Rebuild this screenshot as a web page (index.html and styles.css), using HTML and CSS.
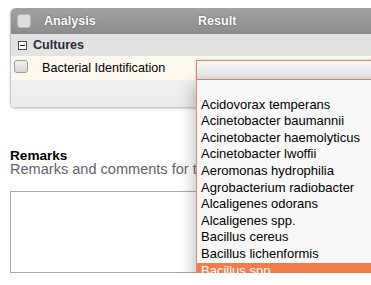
FILE: index.html
```html
<!DOCTYPE html>
<html lang="en">
<head>
    <meta charset="UTF-8">
    <meta name="viewport" content="width=device-width, initial-scale=1.0">
    <title>Analyses</title>
    <link rel="stylesheet" href="styles.css">
</head>
<body>
    <div class="analyses">
        <div class="head-row">
            <span class="check check-head"></span>
            <span class="col-analysis">Analysis</span>
            <span class="col-result">Result</span>
        </div>
        <div class="cat-row">
            <span class="toggle"></span>
            <span>Cultures</span>
        </div>
        <div class="item-row">
            <span class="check"></span>
            <span class="item-name">Bacterial Identification</span>
            <div class="result-cell">
                <div class="select"></div>
                <ul class="options">
                    <li>&nbsp;</li>
                    <li>Acidovorax temperans</li>
                    <li>Acinetobacter baumannii</li>
                    <li>Acinetobacter haemolyticus</li>
                    <li>Acinetobacter lwoffii</li>
                    <li>Aeromonas hydrophilia</li>
                    <li>Agrobacterium radiobacter</li>
                    <li>Alcaligenes odorans</li>
                    <li>Alcaligenes spp.</li>
                    <li>Bacillus cereus</li>
                    <li>Bacillus lichenformis</li>
                    <li class="active">Bacillus spp.</li>
                    <li>Bacteroides fragilis</li>
                    <li>Bacteroides spp.</li>
                </ul>
            </div>
        </div>
        <div class="foot-row"></div>
    </div>

    <div class="remarks">
        <h3>Remarks</h3>
        <p>Remarks and comments for this analysis request</p>
        <textarea></textarea>
    </div>
</body>
</html>
```

FILE: styles.css
```css
html {
    overflow: hidden;
}
body {
    margin: 0;
    padding: 8px 0 0 10px;
    font-family: "Liberation Sans", Arial, sans-serif;
    color: #000;
}
.analyses {
    margin-right: -20px;
    border: 1px solid #c6c6c6;
    border-top: none;
    border-radius: 5px;
    box-shadow: 0 1px 2px rgba(0, 0, 0, 0.18);
}
.head-row {
    display: grid;
    grid-template-columns: 33px 152px 1fr;
    height: 26px;
    align-items: center;
    background: linear-gradient(#a2a2a2, #8b8b8b);
    border-radius: 5px 5px 0 0;
    color: #fff;
    font-size: 12.6px;
    font-weight: bold;
    text-shadow: 0 0 2px rgba(0, 0, 0, 0.45);
}
.check {
    display: block;
    width: 12px;
    height: 11px;
    border: 1px solid #9a9a9a;
    border-radius: 3px;
    background: linear-gradient(#f2f2f2, #d4d4d4);
}
.check-head {
    margin-left: 6px;
    height: 12px;
    border-color: #b8b8b8;
    background: #dedede;
}
.col-result {
    padding-left: 2px;
}
.cat-row {
    display: flex;
    align-items: center;
    gap: 6px;
    height: 22px;
    padding-left: 7px;
    background: #e2e2e2;
    color: #2b2b35;
    font-size: 12.6px;
    font-weight: bold;
}
.toggle {
    position: relative;
    width: 7px;
    height: 7px;
    border: 1px solid #444;
    background: #fff;
}
.toggle::after {
    content: "";
    position: absolute;
    left: 1px;
    right: 1px;
    top: 3px;
    height: 1px;
    background: #222;
}
.item-row {
    display: grid;
    grid-template-columns: 31px 154px 1fr;
    height: 24px;
    background: #fff8ee;
    font-size: 12.6px;
}
.item-row .check {
    margin: 4px 0 0 3px;
}
.item-name {
    padding-top: 5px;
}
.result-cell {
    position: relative;
    padding-top: 4px;
}
.select {
    height: 18px;
    border: 1px solid #d58c6c;
    box-shadow: 0 0 2px #f4b08f;
    background: linear-gradient(#f8f8f8, #e3e3e3);
}
.options {
    position: absolute;
    top: 100%;
    left: 0;
    width: 220px;
    margin: 0;
    padding: 0;
    list-style: none;
    background: #f8f8f8;
    border-left: 1px solid #d9926f;
    box-shadow: -3px 4px 14px rgba(0, 0, 0, 0.24);
    font-size: 13px;
    line-height: 16.6px;
    z-index: 2;
}
.options li {
    padding-left: 4px;
    white-space: nowrap;
}
.options .active {
    background: #ef7c4a;
    color: #fff;
}
.foot-row {
    height: 27px;
    background: linear-gradient(#f0f0f0, #ebebeb);
    border-radius: 0 0 5px 5px;
}
.remarks {
    margin-top: 41px;
}
.remarks h3 {
    margin: 0;
    font-size: 13.6px;
    line-height: 14px;
}
.remarks p {
    margin: 0;
    color: #5f6470;
    font-size: 14.55px;
    line-height: 13px;
    white-space: nowrap;
}
.remarks textarea {
    display: block;
    box-sizing: border-box;
    width: 350px;
    height: 82px;
    margin-top: 15px;
    border: 1px solid #a8a8a8;
    resize: none;
}
```
